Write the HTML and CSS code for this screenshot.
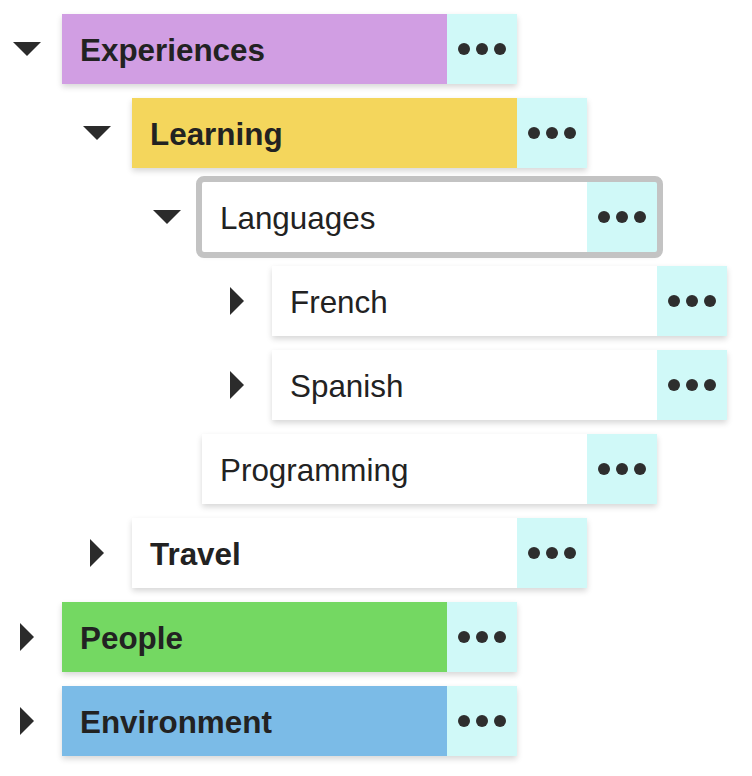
FILE: index.html
```html
<!DOCTYPE html>
<html lang="en">
<head>
    <meta charset="UTF-8">
    <title>Tree</title>
    <link rel="stylesheet" href="styles.css">
</head>
<body>
    <ul class="tree">
        <li>
            <div class="row">
                <span class="toggle open"><svg viewBox="0 0 30 30"><polygon points="1,8 29,8 15,22"/></svg></span>
                <div class="node strong purple">
                    <span class="label">Experiences</span>
                    <span class="more"><i></i><i></i><i></i></span>
                </div>
            </div>
            <ul>
                <li>
                    <div class="row">
                        <span class="toggle open"><svg viewBox="0 0 30 30"><polygon points="1,8 29,8 15,22"/></svg></span>
                        <div class="node strong yellow">
                            <span class="label">Learning</span>
                            <span class="more"><i></i><i></i><i></i></span>
                        </div>
                    </div>
                    <ul>
                        <li>
                            <div class="row">
                                <span class="toggle open"><svg viewBox="0 0 30 30"><polygon points="1,8 29,8 15,22"/></svg></span>
                                <div class="node selected">
                                    <span class="label">Languages</span>
                                    <span class="more"><i></i><i></i><i></i></span>
                                </div>
                            </div>
                            <ul>
                                <li>
                                    <div class="row">
                                        <span class="toggle"><svg viewBox="0 0 30 30"><polygon points="8,1 8,29 22,15"/></svg></span>
                                        <div class="node">
                                            <span class="label">French</span>
                                            <span class="more"><i></i><i></i><i></i></span>
                                        </div>
                                    </div>
                                </li>
                                <li>
                                    <div class="row">
                                        <span class="toggle"><svg viewBox="0 0 30 30"><polygon points="8,1 8,29 22,15"/></svg></span>
                                        <div class="node">
                                            <span class="label">Spanish</span>
                                            <span class="more"><i></i><i></i><i></i></span>
                                        </div>
                                    </div>
                                </li>
                            </ul>
                        </li>
                        <li>
                            <div class="row">
                                <span class="toggle"></span>
                                <div class="node">
                                    <span class="label">Programming</span>
                                    <span class="more"><i></i><i></i><i></i></span>
                                </div>
                            </div>
                        </li>
                    </ul>
                </li>
                <li>
                    <div class="row">
                        <span class="toggle"><svg viewBox="0 0 30 30"><polygon points="8,1 8,29 22,15"/></svg></span>
                        <div class="node strong">
                            <span class="label">Travel</span>
                            <span class="more"><i></i><i></i><i></i></span>
                        </div>
                    </div>
                </li>
            </ul>
        </li>
        <li>
            <div class="row">
                <span class="toggle"><svg viewBox="0 0 30 30"><polygon points="8,1 8,29 22,15"/></svg></span>
                <div class="node strong green">
                    <span class="label">People</span>
                    <span class="more"><i></i><i></i><i></i></span>
                </div>
            </div>
        </li>
        <li>
            <div class="row">
                <span class="toggle"><svg viewBox="0 0 30 30"><polygon points="8,1 8,29 22,15"/></svg></span>
                <div class="node strong blue">
                    <span class="label">Environment</span>
                    <span class="more"><i></i><i></i><i></i></span>
                </div>
            </div>
        </li>
    </ul>
</body>
</html>
```

FILE: styles.css
```css
body {
    margin: 0;
    background: #ffffff;
    font-family: 'Liberation Sans', Arial, sans-serif;
    color: #222222;
}

.tree {
    list-style: none;
    margin: 0;
    padding: 14px 0 0 12px;
}

.tree ul {
    list-style: none;
    margin: 0;
    padding: 0 0 0 70px;
}

.row {
    display: flex;
    align-items: center;
    margin-bottom: 14px;
}

.toggle {
    width: 30px;
    height: 30px;
    margin-right: 20px;
    flex: none;
}

.toggle svg {
    display: block;
    width: 30px;
    height: 30px;
    fill: #2b2b2b;
}

.node {
    display: flex;
    width: 455px;
    height: 70px;
    background: #ffffff;
    box-shadow: 0 3px 6px rgba(0, 0, 0, 0.16);
}

.node.selected {
    outline: 6px solid #c3c3c3;
    border-radius: 2px;
}

.label {
    flex: 1;
    display: flex;
    align-items: center;
    padding: 4px 0 0 18px;
    font-size: 31.4px;
}

.strong .label {
    font-weight: bold;
}

.purple .label { background: #d19ee3; }
.yellow .label { background: #f4d65c; }
.green .label { background: #74d862; }
.blue .label { background: #7bbbe7; }

.more {
    width: 70px;
    display: flex;
    align-items: center;
    justify-content: center;
    gap: 6px;
    background: #d0f9f8;
}

.more i {
    width: 12px;
    height: 12px;
    border-radius: 50%;
    background: #2e2e2e;
}
```
